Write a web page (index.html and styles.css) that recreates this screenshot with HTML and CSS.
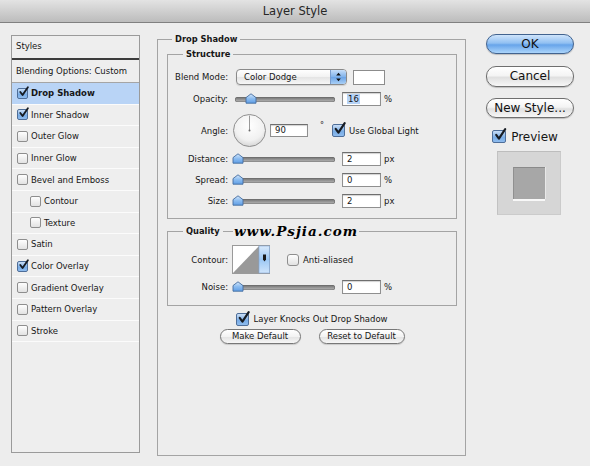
FILE: index.html
```html
<!DOCTYPE html>
<html>
<head>
<meta charset="utf-8">
<title>Layer Style</title>
<link rel="stylesheet" href="styles.css">
</head>
<body>
<svg class="defs" width="0" height="0" aria-hidden="true">
  <defs>
    <linearGradient id="knobg" x1="0" y1="0" x2="0" y2="1">
      <stop offset="0" stop-color="#d7e9fc"/>
      <stop offset="0.5" stop-color="#8dbdf0"/>
      <stop offset="1" stop-color="#5f9ee6"/>
    </linearGradient>
    <radialGradient id="dialg" cx="0.5" cy="0.35" r="0.65">
      <stop offset="0" stop-color="#ffffff"/>
      <stop offset="0.7" stop-color="#f1f1f1"/>
      <stop offset="1" stop-color="#d6d6d6"/>
    </radialGradient>
    <linearGradient id="blueg" x1="0" y1="0" x2="0" y2="1">
      <stop offset="0" stop-color="#d9eafc"/>
      <stop offset="0.5" stop-color="#9cc8f4"/>
      <stop offset="1" stop-color="#cfe4fb"/>
    </linearGradient>
  </defs>
</svg>
<div class="titlebar">Layer Style</div>
<div class="main">
  <div class="styles">
    <div class="sp-head">Styles</div>
    <div class="sp-blend">Blending Options: Custom</div>
    <ul class="sp-list">
      <li class="sel"><span class="cb on"><svg viewBox="0 0 12 12"><path d="M2.5 5.5 L5 8.8 L10.8 0.2"/></svg></span>Drop Shadow</li>
      <li><span class="cb on"><svg viewBox="0 0 12 12"><path d="M2.5 5.5 L5 8.8 L10.8 0.2"/></svg></span>Inner Shadow</li>
      <li><span class="cb"></span>Outer Glow</li>
      <li><span class="cb"></span>Inner Glow</li>
      <li><span class="cb"></span>Bevel and Emboss</li>
      <li class="sub"><span class="cb"></span>Contour</li>
      <li class="sub"><span class="cb"></span>Texture</li>
      <li><span class="cb"></span>Satin</li>
      <li><span class="cb on"><svg viewBox="0 0 12 12"><path d="M2.5 5.5 L5 8.8 L10.8 0.2"/></svg></span>Color Overlay</li>
      <li><span class="cb"></span>Gradient Overlay</li>
      <li><span class="cb"></span>Pattern Overlay</li>
      <li><span class="cb"></span>Stroke</li>
    </ul>
  </div>

  <fieldset class="outer">
    <legend>Drop Shadow</legend>

    <fieldset class="inner structure">
      <legend>Structure</legend>
      <div class="row r-blend">
        <span class="lbl">Blend Mode:</span>
        <div class="select">
          <span class="sel-text">Color Dodge</span>
          <span class="sel-arrows"><svg viewBox="0 0 16 14"><path d="M8 2.5 L10.5 5.5 H5.5 Z M8 11.5 L10.5 8.5 H5.5 Z"/></svg></span>
        </div>
        <span class="swatch"></span>
      </div>
      <div class="row r-opacity">
        <span class="lbl">Opacity:</span>
        <div class="slider"><svg class="knob" style="left:10px" viewBox="0 0 12 11"><path d="M1 4.6 L6 0.8 L11 4.6 V10.2 H1 Z"/></svg></div>
        <span class="inp"><span class="hl">16</span></span>
        <span class="unit">%</span>
      </div>
      <div class="row r-angle">
        <span class="lbl">Angle:</span>
        <svg class="dial" viewBox="0 0 33 33"><circle cx="16.5" cy="16.5" r="16" fill="url(#dialg)" stroke="#8e8e8e"/><line x1="16.5" y1="16.5" x2="16.5" y2="1.5" stroke="#9a9a9a" stroke-width="1"/><circle cx="16.5" cy="16.5" r="1" fill="#6a6a6a"/></svg>
        <span class="inp angle-inp">90</span>
        <span class="deg">°</span>
        <span class="cb big on"><svg viewBox="0 0 12 12"><path d="M2.5 5.5 L5 8.8 L10.8 0.2"/></svg></span>
        <span class="cb-text">Use Global Light</span>
      </div>
      <div class="row r-dist">
        <span class="lbl">Distance:</span>
        <div class="slider"><svg class="knob" style="left:-3px" viewBox="0 0 12 11"><path d="M1 4.6 L6 0.8 L11 4.6 V10.2 H1 Z"/></svg></div>
        <span class="inp">2</span>
        <span class="unit">px</span>
      </div>
      <div class="row r-next">
        <span class="lbl">Spread:</span>
        <div class="slider"><svg class="knob" style="left:-3px" viewBox="0 0 12 11"><path d="M1 4.6 L6 0.8 L11 4.6 V10.2 H1 Z"/></svg></div>
        <span class="inp">0</span>
        <span class="unit">%</span>
      </div>
      <div class="row r-next">
        <span class="lbl">Size:</span>
        <div class="slider"><svg class="knob" style="left:-3px" viewBox="0 0 12 11"><path d="M1 4.6 L6 0.8 L11 4.6 V10.2 H1 Z"/></svg></div>
        <span class="inp">2</span>
        <span class="unit">px</span>
      </div>
    </fieldset>

    <fieldset class="inner quality">
      <legend>Quality<span class="watermark">www.Psjia.com</span></legend>
      <div class="row r-contour">
        <span class="lbl">Contour:</span>
        <svg class="contour" viewBox="0 0 38 29">
          <rect x="0.5" y="0.5" width="37" height="28" fill="#ffffff" stroke="#9a9a9a"/>
          <polygon points="1,28 27,1 27,28" fill="#999999"/>
          <rect x="27" y="1" width="10.5" height="27" fill="url(#blueg)" stroke="#7fa6d6" stroke-width="0.6"/>
          <path d="M31 9.5 H34 V14.5 L32.5 16.5 L31 14.5 Z" fill="#1a1a1a"/>
        </svg>
        <span class="cb aa"></span>
        <span class="cb-text">Anti-aliased</span>
      </div>
      <div class="row r-noise">
        <span class="lbl">Noise:</span>
        <div class="slider"><svg class="knob" style="left:-3px" viewBox="0 0 12 11"><path d="M1 4.6 L6 0.8 L11 4.6 V10.2 H1 Z"/></svg></div>
        <span class="inp">0</span>
        <span class="unit">%</span>
      </div>
    </fieldset>

    <div class="knock">
      <span class="cb big on"><svg viewBox="0 0 12 12"><path d="M2.5 5.5 L5 8.8 L10.8 0.2"/></svg></span>
      <span class="cb-text">Layer Knocks Out Drop Shadow</span>
    </div>
    <div class="defaults">
      <span class="pill w1">Make Default</span>
      <span class="pill w2">Reset to Default</span>
    </div>
  </fieldset>

  <div class="side">
    <div class="abtn ok">OK</div>
    <div class="abtn cancel">Cancel</div>
    <div class="abtn newstyle">New Style...</div>
    <div class="preview-row">
      <span class="cb prev on"><svg viewBox="0 0 12 12"><path d="M2.5 5.5 L5 8.8 L10.8 0.2"/></svg></span>
      <span>Preview</span>
    </div>
    <div class="preview-box"><div class="preview-square"></div></div>
  </div>
</div>
</body>
</html>
```

FILE: styles.css
```css
* { box-sizing: border-box; }
html, body { margin: 0; padding: 0; }
body {
  width: 590px;
  height: 466px;
  overflow: hidden;
  background: #ededed;
  font-family: "DejaVu Sans", "Liberation Sans", sans-serif;
  font-size: 8.5px;
  color: #161616;
}
.defs { display: block; width: 0; height: 0; }

.titlebar {
  height: 23px;
  background: linear-gradient(#e3e3e3, #bcbcbc);
  border-bottom: 1px solid #808080;
  text-align: center;
  font-size: 11.5px;
  line-height: 23px;
  color: #262626;
}

.main {
  display: flex;
  align-items: flex-start;
  padding: 10px 0 0 11px;
}

/* ---------- styles list ---------- */
.styles {
  width: 129px;
  height: 418px;
  margin-top: 2px;
  border: 1px solid #9a9a9a;
  background: #eeeeee;
}
.sp-head {
  height: 24px;
  border-bottom: 2px solid #3c3c3c;
  padding-left: 4px;
  line-height: 21px;
}
.sp-blend {
  height: 23px;
  border-bottom: 1px solid #a5a5a5;
  padding-left: 4px;
  line-height: 22px;
}
.sp-list { list-style: none; margin: 0; padding: 0; }
.sp-list li {
  height: 21.6px;
  display: flex;
  align-items: center;
  padding-left: 5px;
  border-bottom: 1px solid #fbfbfb;
}
.sp-list li .cb { margin-right: 3px; }
.sp-list li.sub { padding-left: 18px; }
.sp-list li.sel { background: #b9d4f6; font-weight: bold; }

/* ---------- checkboxes ---------- */
.cb {
  position: relative;
  flex: none;
  display: inline-block;
  width: 11px;
  height: 11px;
  border: 1px solid #8e8e8e;
  border-radius: 2px;
  background: linear-gradient(#fefefe, #e2e2e2);
}
.cb.on {
  background: linear-gradient(#c9def6, #78ace6 60%, #8fbcee);
  border-color: #4e6e99;
}
.cb svg {
  position: absolute;
  left: 0;
  top: -2px;
  width: 11px;
  height: 11px;
  overflow: visible;
}
.cb path {
  fill: none;
  stroke: #161b22;
  stroke-width: 2;
  stroke-linecap: round;
  stroke-linejoin: round;
}
.cb.big { width: 13px; height: 13px; }
.cb.big svg { width: 13px; height: 13px; }
.cb-text { margin-left: 4px; }

/* ---------- fieldsets ---------- */
fieldset {
  margin: 0;
  min-width: 0;
  border: 1px solid #a4a4a4;
}
legend {
  font-weight: bold;
  line-height: 12px;
  padding: 0 3px;
}
.outer {
  width: 309px;
  height: 423px;
  margin-left: 17px;
  padding: 3px 8px 0 9px;
}
.outer > legend { margin-left: 5px; font-size: 8.3px; }
.inner { padding: 0; }
.inner > legend { margin-left: 15px; font-size: 8.3px; position: relative; }
.structure { padding: 9px 0 10px 0; }
.quality { margin-top: 6px; padding: 8px 0 11px 0; }

.watermark {
  position: absolute;
  left: 50px;
  top: -2px;
  padding: 0 1px;
  background: #ededed;
  font-family: "DejaVu Serif", "Liberation Serif", serif;
  font-style: italic;
  font-weight: bold;
  font-size: 13.5px;
  line-height: 16px;
  letter-spacing: 1px;
  color: #000;
  white-space: nowrap;
}

/* ---------- rows ---------- */
.row { display: flex; align-items: center; height: 14px; }
.lbl { width: 60px; margin-right: 7px; text-align: right; flex: none; }
.r-blend { height: 16px; }
.r-opacity { margin-top: 7px; }
.r-angle { margin-top: 8px; height: 33px; }
.r-dist { margin-top: 5px; }
.r-next { margin-top: 7px; }
.r-contour { height: 29px; }
.r-noise { margin-top: 6px; }

.select {
  width: 111px;
  height: 16px;
  margin-left: 1px;
  display: flex;
  border: 1px solid #8a8a8a;
  border-radius: 4px;
  background: linear-gradient(#ffffff, #f2f2f2 50%, #e4e4e4 51%, #f7f7f7);
  box-shadow: 0 1px 1px rgba(0,0,0,0.12);
  overflow: hidden;
}
.sel-text { flex: 1; padding-left: 7px; line-height: 14px; }
.sel-arrows {
  width: 16px;
  border-left: 1px solid #7a9ccc;
  background: linear-gradient(#c6def9, #7fb1ea 50%, #6aa3e6 51%, #a9cff6);
}
.sel-arrows svg { display: block; width: 15px; height: 14px; }
.sel-arrows path { fill: #111; }
.swatch {
  width: 32px;
  height: 15px;
  margin-left: 6px;
  background: #fff;
  border: 1px solid #8c8c8c;
}

.slider {
  position: relative;
  width: 100px;
  height: 5px;
  flex: none;
  border-radius: 3px;
  background: linear-gradient(#6d6d6d, #9c9c9c 60%, #b8b8b8);
  box-shadow: inset 0 0 0 0.5px #6a6a6a;
}
.knob {
  position: absolute;
  top: -4px;
  width: 12px;
  height: 11px;
  overflow: visible;
}
.knob path { fill: url(#knobg); stroke: #456c9e; stroke-width: 0.9; }

.inp {
  width: 39px;
  height: 14px;
  margin-left: 7px;
  flex: none;
  border: 1px solid #8f8f8f;
  border-top-color: #6e6e6e;
  background: #fff;
  box-shadow: inset 0 1px 1px rgba(0,0,0,0.18);
  padding-left: 4px;
  line-height: 12px;
}
.hl { background: #b6d3f7; padding: 0 1px; }
.unit { margin-left: 3px; }

.dial { width: 33px; height: 33px; margin-left: -2px; flex: none; }
.angle-inp { width: 38px; height: 13px; margin-left: 4px; line-height: 11px; }
.deg { align-self: flex-start; margin-top: 7px; margin-left: 12px; width: 4px; font-size: 8px; }
.r-angle .cb { margin-left: 8px; }

.contour { width: 38px; height: 29px; margin-left: -3px; flex: none; }
.cb.aa { width: 12px; height: 12px; margin-left: 17px; border-radius: 3px; }

.knock {
  display: flex;
  align-items: center;
  justify-content: center;
  height: 14px;
  margin-top: 6px;
}
.defaults {
  display: flex;
  justify-content: center;
  gap: 18px;
  margin-top: 3px;
}
.pill {
  height: 15px;
  border: 1px solid #777;
  border-radius: 8px;
  background: linear-gradient(#ffffff, #f3f3f3 50%, #e3e3e3 51%, #f6f6f6);
  box-shadow: 0 1px 1px rgba(0,0,0,0.15);
  text-align: center;
  line-height: 13px;
}
.pill.w1 { width: 81px; }
.pill.w2 { width: 86px; }

/* ---------- right side ---------- */
.side {
  width: 88px;
  margin-left: 20px;
  margin-top: 1px;
  display: flex;
  flex-direction: column;
  align-items: center;
}
.abtn {
  width: 88px;
  height: 20px;
  border: 1px solid #6f6f6f;
  border-radius: 10px;
  background: linear-gradient(#ffffff, #f4f4f4 45%, #e0e0e0 55%, #f7f7f7);
  box-shadow: 0 1px 1px rgba(0,0,0,0.2);
  font-size: 12px;
  line-height: 18px;
  text-align: center;
  color: #111;
}
.abtn.ok {
  border-color: #42638f;
  background: linear-gradient(#cfe4fb, #91c0f2 45%, #67a4ea 55%, #acd5fb);
}
.abtn.cancel { margin-top: 12px; height: 21px; line-height: 19px; }
.abtn.newstyle { margin-top: 11px; }
.preview-row {
  display: flex;
  align-items: center;
  margin-top: 12px;
  height: 13px;
  font-size: 12px;
  margin-left: -10px;
}
.cb.prev { width: 14px; height: 13px; margin-right: 5px; }
.cb.prev svg { width: 14px; height: 13px; }
.preview-box {
  width: 64px;
  height: 64px;
  margin-top: 8px;
  margin-left: -2px;
  background: #d6d6d6;
  border: 1px solid #cbcbcb;
  border-top-color: #bdbdbd;
  border-left-color: #c2c2c2;
  display: flex;
  align-items: center;
  justify-content: center;
}
.preview-square {
  width: 32px;
  height: 32px;
  background: #a7a7a7;
  border-top: 1px solid #8a8a8a;
  border-left: 1px solid #909090;
  box-shadow: 0 2px 0 #f8f8f8, 1px 0 0 #e8e8e8;
}
```
